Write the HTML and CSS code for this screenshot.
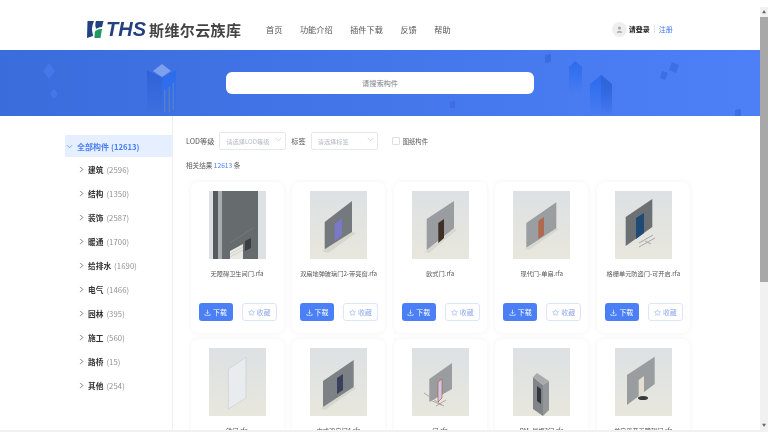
FILE: index.html
```html
<!DOCTYPE html>
<html lang="zh-CN">
<head>
    <meta charset="UTF-8">
    <title>斯维尔云族库</title>
    <link rel="stylesheet" href="styles.css">
</head>
<body>
<div class="window">
    <div class="page">
        <header class="top">
            <div class="logo">
                <svg class="logo-mark" viewBox="0 0 18 19">
                    <path d="M0.5 1 L7 1 C6 4 5 6 5 9 C5 12 6 14 6 16 L0 18 Z" fill="#23417f"/>
                    <path d="M9 1 L16.5 1 L15 7 C12 7 10 8 9.5 9 C8 7 8 4 9 1 Z" fill="#23417f"/>
                    <path d="M7.5 18 C8 14 7 12 9 10.5 C11 9 13 9 15 9 L13.5 18 Z" fill="#1f9a62"/>
                </svg>
                <span class="logo-en">THS</span>
                <span class="logo-cn">斯维尔云族库</span>
            </div>
            <nav class="nav">
                <a>首页</a>
                <a>功能介绍</a>
                <a>插件下载</a>
                <a>反馈</a>
                <a>帮助</a>
            </nav>
            <div class="user">
                <span class="avatar">
                    <svg viewBox="0 0 10 10" width="7" height="7"><circle cx="5" cy="3" r="2.2" fill="#a9a9a9"/><path d="M1 9.5 C1 6.5 9 6.5 9 9.5 Z" fill="#a9a9a9"/></svg>
                </span>
                <span class="login">请登录</span>
                <span class="sep"></span>
                <a class="reg">注册</a>
            </div>
        </header>

        <section class="banner">
            <svg class="banner-art" viewBox="0 0 760 66" preserveAspectRatio="none">
                <defs>
                    <linearGradient id="fade" x1="0" y1="0" x2="0" y2="1">
                        <stop offset="0" stop-color="#2f62d6"/>
                        <stop offset="1" stop-color="#2f62d6" stop-opacity="0"/>
                    </linearGradient>
                    <linearGradient id="fadeb" x1="0" y1="0" x2="0" y2="1">
                        <stop offset="0" stop-color="#2a6cee"/>
                        <stop offset="1" stop-color="#2a6cee" stop-opacity="0"/>
                    </linearGradient>
                </defs>
                <path d="M49 13 L55 21 L49 29 L43 21 Z" fill="#4676e8"/>
                <path d="M54 39 L58 44 L54 49 L50 44 Z" fill="#4676e8"/>
                <path d="M183 15 L186 19 L183 23 L180 19 Z" fill="#4172e4"/>
                <path d="M147 20 L162 28 L162 66 L147 66 Z" fill="url(#fade)"/>
                <path d="M162 28 L176 20 L176 66 L162 66 Z" fill="url(#fadeb)"/>
                <path d="M162 14 L171 21 L162 27 L153 21 Z" fill="#7ea1ee"/>
                <path d="M164 40 h1.5 v22 h-1.5 Z M168.5 37 h1.5 v25 h-1.5 Z M172.5 33 h1.5 v27 h-1.5 Z" fill="#7088b4" opacity=".55"/>
                <path d="M545 5 L551 4 L551 12 L545 13 Z" fill="#3a6be0"/>
                <path d="M569 17 L575 11 L582 17 L582 43 L569 43 Z" fill="url(#fadeb)"/>
                <path d="M590 34 L601 25 L612 34 L612 66 L590 66 Z" fill="url(#fadeb)"/>
                <path d="M601 25 L612 34 L612 66 L601 66 Z" fill="url(#fade)"/>
                <path d="M450 52 L455 51 L455 58 L450 58 Z" fill="#3d6ee2"/>
                <path d="M672 12 L679 15 L676 23 L669 20 Z" fill="#3d6ee2"/>
                <path d="M662 21 L668 23 L665 30 L660 28 Z" fill="#3d6ee2"/>
                <path d="M735 60 L741 59 L741 66 L735 66 Z" fill="#3d6ee2"/>
            </svg>
            <div class="search">请搜索构件</div>
        </section>

        <div class="content">
            <aside class="side">
                <div class="tree-all">
                    <svg class="chev" viewBox="0 0 8 8"><path d="M1 2.5 L4 5.5 L7 2.5" fill="none" stroke="#6f9cf7" stroke-width="1"/></svg>
                    <span>全部构件</span><span class="all-num">(12613)</span>
                </div>
                <div class="tree-item"><svg class="chev" viewBox="0 0 8 8"><path d="M2.5 1 L5.5 4 L2.5 7" fill="none" stroke="#666" stroke-width="1"/></svg><b>建筑</b><span>(2596)</span></div>
                <div class="tree-item"><svg class="chev" viewBox="0 0 8 8"><path d="M2.5 1 L5.5 4 L2.5 7" fill="none" stroke="#666" stroke-width="1"/></svg><b>结构</b><span>(1350)</span></div>
                <div class="tree-item"><svg class="chev" viewBox="0 0 8 8"><path d="M2.5 1 L5.5 4 L2.5 7" fill="none" stroke="#666" stroke-width="1"/></svg><b>装饰</b><span>(2587)</span></div>
                <div class="tree-item"><svg class="chev" viewBox="0 0 8 8"><path d="M2.5 1 L5.5 4 L2.5 7" fill="none" stroke="#666" stroke-width="1"/></svg><b>暖通</b><span>(1700)</span></div>
                <div class="tree-item"><svg class="chev" viewBox="0 0 8 8"><path d="M2.5 1 L5.5 4 L2.5 7" fill="none" stroke="#666" stroke-width="1"/></svg><b>给排水</b><span>(1690)</span></div>
                <div class="tree-item"><svg class="chev" viewBox="0 0 8 8"><path d="M2.5 1 L5.5 4 L2.5 7" fill="none" stroke="#666" stroke-width="1"/></svg><b>电气</b><span>(1466)</span></div>
                <div class="tree-item"><svg class="chev" viewBox="0 0 8 8"><path d="M2.5 1 L5.5 4 L2.5 7" fill="none" stroke="#666" stroke-width="1"/></svg><b>园林</b><span>(395)</span></div>
                <div class="tree-item"><svg class="chev" viewBox="0 0 8 8"><path d="M2.5 1 L5.5 4 L2.5 7" fill="none" stroke="#666" stroke-width="1"/></svg><b>施工</b><span>(560)</span></div>
                <div class="tree-item"><svg class="chev" viewBox="0 0 8 8"><path d="M2.5 1 L5.5 4 L2.5 7" fill="none" stroke="#666" stroke-width="1"/></svg><b>路桥</b><span>(15)</span></div>
                <div class="tree-item"><svg class="chev" viewBox="0 0 8 8"><path d="M2.5 1 L5.5 4 L2.5 7" fill="none" stroke="#666" stroke-width="1"/></svg><b>其他</b><span>(254)</span></div>
            </aside>

            <main class="main">
                <div class="filters">
                    <span class="f-label">LOD等级</span>
                    <div class="select lod">请选择LOD等级<svg viewBox="0 0 8 8"><path d="M1 2.5 L4 5.5 L7 2.5" fill="none" stroke="#c0c4cc" stroke-width=".8"/></svg></div>
                    <span class="f-label tag">标签</span>
                    <div class="select">请选择标签<svg viewBox="0 0 8 8"><path d="M1 2.5 L4 5.5 L7 2.5" fill="none" stroke="#c0c4cc" stroke-width=".8"/></svg></div>
                    <span class="check"></span>
                    <span class="check-text">图纸构件</span>
                </div>
                <p class="total">相关结果 <em>12613</em> 条</p>

                <div class="cards">
                    <div class="card">
                        <div class="thumb"><svg viewBox="0 0 57 68">
                            <rect x="0" y="0" width="57" height="68" fill="#dde1e3"/>
                            <rect x="4" y="0" width="5" height="68" fill="#565b5e"/>
                            <rect x="9" y="0" width="4" height="68" fill="#a9adaf"/>
                            <rect x="13" y="0" width="36" height="68" fill="#666b6e"/>
                            <path d="M21 52 L44 37" stroke="#7d8285" stroke-width=".6"/>
                            <path d="M21 60 L34 53 L34 68 L21 68 Z" fill="#e9e9e3"/>
                            <path d="M21 63 L34 56 M21 66 L34 59" stroke="#b9bab6" stroke-width=".5"/>
                            <path d="M36 50 L42 47 L42 57 L36 60 Z" fill="#3b3f42"/>
                        </svg></div>
                        <div class="name">无障碍卫生间门.rfa</div>
                        <div class="btns">
                            <a class="btn-dl"><svg viewBox="0 0 10 10"><path d="M5 1 V6.5 M3 4.7 L5 6.7 L7 4.7 M1.2 7 V9 H8.8 V7" fill="none" stroke="#fff" stroke-width=".9"/></svg>下载</a>
                            <a class="btn-fav"><svg viewBox="0 0 10 10"><path d="M5 1 L6.2 3.7 L9.2 4 L7 6 L7.6 9 L5 7.5 L2.4 9 L3 6 L0.8 4 L3.8 3.7 Z" fill="none" stroke="#8fb0f5" stroke-width=".8"/></svg>收藏</a>
                        </div>
                    </div>
                    <div class="card">
                        <div class="thumb"><svg viewBox="0 0 57 68">
                            <path d="M12 60 L15 58 L42 41 L46 42 L18 62 Z" fill="#d6d6ce"/>
                            <path d="M14.7 31 L42 10 L42 41 L14.7 58.3 Z" fill="#73797c"/>
                            <path d="M24.7 33 L32 27 L32 44 L24.7 50.5 Z" fill="#7b78c8"/>
                        </svg></div>
                        <div class="name">双扇地弹玻璃门2-带亮窗.rfa</div>
                        <div class="btns">
                            <a class="btn-dl"><svg viewBox="0 0 10 10"><path d="M5 1 V6.5 M3 4.7 L5 6.7 L7 4.7 M1.2 7 V9 H8.8 V7" fill="none" stroke="#fff" stroke-width=".9"/></svg>下载</a>
                            <a class="btn-fav"><svg viewBox="0 0 10 10"><path d="M5 1 L6.2 3.7 L9.2 4 L7 6 L7.6 9 L5 7.5 L2.4 9 L3 6 L0.8 4 L3.8 3.7 Z" fill="none" stroke="#8fb0f5" stroke-width=".8"/></svg>收藏</a>
                        </div>
                    </div>
                    <div class="card">
                        <div class="thumb"><svg viewBox="0 0 57 68">
                            <path d="M13 61 L15 59 L42 38 L45 39 L17 62 Z" fill="#d8d8d0"/>
                            <path d="M14.7 28 L42 10 L42 37.3 L14.7 59 Z" fill="#9a9d9f"/>
                            <path d="M26.3 32 L32 28 L32 47 L26.3 52 Z" fill="#3f3026"/>
                        </svg></div>
                        <div class="name">欧式门.rfa</div>
                        <div class="btns">
                            <a class="btn-dl"><svg viewBox="0 0 10 10"><path d="M5 1 V6.5 M3 4.7 L5 6.7 L7 4.7 M1.2 7 V9 H8.8 V7" fill="none" stroke="#fff" stroke-width=".9"/></svg>下载</a>
                            <a class="btn-fav"><svg viewBox="0 0 10 10"><path d="M5 1 L6.2 3.7 L9.2 4 L7 6 L7.6 9 L5 7.5 L2.4 9 L3 6 L0.8 4 L3.8 3.7 Z" fill="none" stroke="#8fb0f5" stroke-width=".8"/></svg>收藏</a>
                        </div>
                    </div>
                    <div class="card">
                        <div class="thumb"><svg viewBox="0 0 57 68">
                            <path d="M12 58 L14 56.7 L43 37 L46 38 L16 59 Z" fill="#d8d8d0"/>
                            <path d="M13.3 32 L43.3 11.3 L43.3 37.3 L13.3 56.7 Z" fill="#9b9ea0"/>
                            <path d="M25.3 30 L31 26 L31 44 L25.3 48 Z" fill="#b0684e"/>
                        </svg></div>
                        <div class="name">现代门-单扇.rfa</div>
                        <div class="btns">
                            <a class="btn-dl"><svg viewBox="0 0 10 10"><path d="M5 1 V6.5 M3 4.7 L5 6.7 L7 4.7 M1.2 7 V9 H8.8 V7" fill="none" stroke="#fff" stroke-width=".9"/></svg>下载</a>
                            <a class="btn-fav"><svg viewBox="0 0 10 10"><path d="M5 1 L6.2 3.7 L9.2 4 L7 6 L7.6 9 L5 7.5 L2.4 9 L3 6 L0.8 4 L3.8 3.7 Z" fill="none" stroke="#8fb0f5" stroke-width=".8"/></svg>收藏</a>
                        </div>
                    </div>
                    <div class="card">
                        <div class="thumb"><svg viewBox="0 0 57 68">
                            <path d="M10.7 26 L37.3 8 L37.3 36 L10.7 55 Z" fill="#6a7073"/>
                            <path d="M21 27 L29 22 L29 42 L21 48 Z" fill="#1f4a74"/>
                            <path d="M24 52 L38 44 M24 56 L40 47 M30 50 L36 53" stroke="#a9aaa6" stroke-width="1" fill="none"/>
                        </svg></div>
                        <div class="name">格栅单元防盗门-可开启.rfa</div>
                        <div class="btns">
                            <a class="btn-dl"><svg viewBox="0 0 10 10"><path d="M5 1 V6.5 M3 4.7 L5 6.7 L7 4.7 M1.2 7 V9 H8.8 V7" fill="none" stroke="#fff" stroke-width=".9"/></svg>下载</a>
                            <a class="btn-fav"><svg viewBox="0 0 10 10"><path d="M5 1 L6.2 3.7 L9.2 4 L7 6 L7.6 9 L5 7.5 L2.4 9 L3 6 L0.8 4 L3.8 3.7 Z" fill="none" stroke="#8fb0f5" stroke-width=".8"/></svg>收藏</a>
                        </div>
                    </div>
                    <div class="card">
                        <div class="thumb"><svg viewBox="0 0 57 68">
                            <path d="M19.3 21 L37 9.3 L37 50 L19.3 61 Z" fill="#e8ecee" stroke="#c6cbce" stroke-width=".6"/>
                        </svg></div>
                        <div class="name">铁门.rfa</div>
                    </div>
                    <div class="card">
                        <div class="thumb"><svg viewBox="0 0 57 68">
                            <path d="M11 61 L13 59 L43.7 39 L46 40 L15 62 Z" fill="#d6d6ce"/>
                            <path d="M13 33 L43.7 12 L43.7 39 L13 59 Z" fill="#7b8184"/>
                            <path d="M27 30 L33 26 L33 42 L27 46 Z" fill="#3c3f5c"/>
                        </svg></div>
                        <div class="name">中式双扇门4.rfa</div>
                    </div>
                    <div class="card">
                        <div class="thumb"><svg viewBox="0 0 57 68">
                            <path d="M17.3 31 L40 15 L40 41 L17.3 54 Z" fill="#9a9d9f"/>
                            <path d="M26 34 L30 31 L30 50 L26 54 Z" fill="#c8cce8" stroke="#c8553d" stroke-width=".7"/>
                            <path d="M12 45 L30 57 M18 52 L32 58 M24 58 L34 52" stroke="#9b9c98" stroke-width=".8" fill="none"/>
                        </svg></div>
                        <div class="name">门.rfa</div>
                    </div>
                    <div class="card">
                        <div class="thumb"><svg viewBox="0 0 57 68">
                            <path d="M20 29 L30 37 L30 68 L20 61 Z" fill="#7f8588"/>
                            <path d="M24 25 L36 33 L30 37 L20 29 Z" fill="#a8acae"/>
                            <path d="M30 37 L36 33 L36 62 L30 68 Z" fill="#93979a"/>
                            <path d="M24 38 L28 41 L28 56 L24 53 Z" fill="#33363a"/>
                        </svg></div>
                        <div class="name">RM_最柜3门.rfa</div>
                    </div>
                    <div class="card">
                        <div class="thumb"><svg viewBox="0 0 57 68">
                            <ellipse cx="28" cy="50" rx="5" ry="2" fill="#3a3a3a"/>
                            <path d="M12 27 L39.7 8.7 L39.7 36 L12 57 Z" fill="#9a9d9f"/>
                            <path d="M23.7 32 L29 28 L29 46 L23.7 49 Z" fill="#e3ddd2"/>
                        </svg></div>
                        <div class="name">单扇平开无障碍门.rfa</div>
                    </div>
                </div>
            </main>
        </div>
    </div>

    <div class="scrollbar">
        <div class="arrow">▲</div>
        <div class="thumb-bar"></div>
        <div class="arrow down">▼</div>
    </div>
</div>
</body>
</html>
```

FILE: styles.css
```css
* {
    box-sizing: border-box;
}
html, body {
    margin: 0;
    height: 432px;
    overflow: hidden;
    background: #fff;
}
body {
    font-family: "Noto Sans CJK SC", "Noto Sans", sans-serif;
    color: #606266;
}
.window {
    display: flex;
    width: 768px;
    height: 432px;
    border-bottom: 2px solid #f1f1f1;
}
.page {
    width: 760px;
    height: 430px;
    overflow: hidden;
    flex: none;
    filter: blur(.45px);
}

/* header */
.top {
    display: flex;
    align-items: center;
    height: 50px;
    padding: 8px 0 0 87px;
}
.logo {
    display: flex;
    align-items: center;
    width: 179px;
}
.logo-mark {
    width: 18px;
    height: 19px;
}
.logo-en {
    margin-left: 1px;
    font-family: "Liberation Sans", sans-serif;
    font-weight: bold;
    font-style: italic;
    font-size: 20px;
    color: #23417f;
}
.logo-cn {
    margin-left: 3px;
    font-size: 15px;
    font-weight: 700;
    letter-spacing: .4px;
    color: #444;
}
.nav {
    display: flex;
    gap: 17.5px;
    font-size: 8.2px;
    color: #555;
}
.user {
    display: flex;
    align-items: center;
    margin-left: 161px;
    font-size: 7px;
}
.avatar {
    display: flex;
    align-items: center;
    justify-content: center;
    width: 15px;
    height: 15px;
    border-radius: 50%;
    background: #eee;
}
.login {
    margin-left: 2px;
    font-weight: bold;
    color: #222;
}
.sep {
    width: 1px;
    height: 8px;
    margin: 0 4px;
    background: #e4e4e4;
}
.reg {
    color: #3f76f2;
}

/* banner */
.banner {
    position: relative;
    display: flex;
    justify-content: center;
    align-items: center;
    height: 66px;
    background: linear-gradient(90deg, #3a6cdc, #4d80f7);
}
.banner-art {
    position: absolute;
    left: 0;
    top: 0;
    width: 100%;
    height: 100%;
}
.search {
    position: relative;
    width: 308px;
    height: 22px;
    line-height: 22px;
    text-align: center;
    border-radius: 6px;
    background: #fff;
    font-size: 7.2px;
    color: #808389;
}

/* left tree */
.content {
    display: flex;
    height: 316px;
}
.side {
    flex: none;
    width: 173px;
    padding: 19px 0 0 65px;
    border-right: 1px solid #eee;
}
.tree-all {
    display: flex;
    align-items: center;
    height: 22px;
    padding-left: 1px;
    background: #e6efff;
    font-size: 8px;
    font-weight: 700;
    color: #4a7ff5;
}
.tree-all .chev {
    margin-right: 4px;
}
.all-num {
    margin-left: 2px;
    font-size: 7.7px;
}
.chev {
    width: 7px;
    height: 7px;
    flex: none;
}
.tree-item {
    display: flex;
    align-items: center;
    height: 24px;
    padding-left: 13px;
    font-size: 7.7px;
    color: #909090;
}
.tree-item .chev {
    margin-right: 3px;
}
.tree-item b {
    margin-right: 3px;
    color: #333;
    font-weight: bold;
}
.tree-item span {
    letter-spacing: .1px;
}

/* filters */
.main {
    flex: 1;
    padding: 16px 0 0 13px;
    overflow: hidden;
}
.filters {
    display: flex;
    align-items: center;
    height: 18px;
}
.f-label {
    font-size: 7.2px;
    color: #555;
    margin-right: 5px;
}
.f-label.tag {
    margin: 0 5px;
}
.select {
    display: flex;
    align-items: center;
    justify-content: space-between;
    width: 67px;
    height: 18px;
    padding: 0 3px 0 6px;
    border: 1px solid #e4e7ed;
    border-radius: 2px;
    font-size: 6.2px;
    color: #b4b8c0;
}
.select svg {
    width: 7px;
    height: 7px;
    margin-top: -3px;
}
.check {
    width: 8px;
    height: 8px;
    margin-left: 14px;
    border: 1px solid #dcdfe6;
    border-radius: 1px;
}
.check-text {
    margin-left: 3px;
    font-size: 6.3px;
    color: #555;
}
.total {
    margin: 8px 0 0;
    font-size: 6.6px;
    line-height: 14px;
    color: #555;
}
.total em {
    font-style: normal;
    color: #4a7ff5;
}

/* cards */
.cards {
    display: grid;
    grid-template-columns: repeat(5, 93px);
    grid-auto-rows: 151px;
    column-gap: 8.6px;
    row-gap: 6px;
    margin: 10px 0 0 4.5px;
}
.card {
    position: relative;
    padding-top: 9px;
    border-radius: 8px;
    background: #fff;
    box-shadow: 0 0 6px rgba(0, 0, 0, .05);
}
.thumb {
    width: 57px;
    height: 68px;
    margin: 0 auto;
    background: linear-gradient(#dde1e4, #e8e7dd);
}
.thumb svg {
    display: block;
    width: 57px;
    height: 68px;
}
.name {
    margin-top: 10px;
    font-size: 6.2px;
    line-height: 10px;
    text-align: center;
    white-space: nowrap;
    color: #555;
}
.btns {
    display: flex;
    justify-content: space-between;
    margin-top: 24px;
    padding: 0 7px 0 8px;
}
.btn-dl, .btn-fav {
    display: flex;
    align-items: center;
    justify-content: center;
    height: 18px;
    width: 34px;
    border-radius: 3px;
    font-size: 7px;
}
.btn-dl {
    background: #4a7ff5;
    color: #fff;
}
.btn-fav {
    width: 35px;
    border: 1px solid #dbe5fb;
    color: #8fa9ea;
}
.btn-dl svg, .btn-fav svg {
    width: 7px;
    height: 7px;
    margin-right: 2px;
}

/* fake window scrollbar */
.scrollbar {
    display: flex;
    flex-direction: column;
    flex: none;
    width: 8px;
    height: 423px;
    margin-top: 7px;
    background: #f1f1f1;
}
.arrow {
    height: 10px;
    font-size: 4px;
    line-height: 10px;
    text-align: center;
    color: #666;
}
.arrow.down {
    margin-top: auto;
}
.thumb-bar {
    height: 265px;
    background: #a8a8a8;
}
```
